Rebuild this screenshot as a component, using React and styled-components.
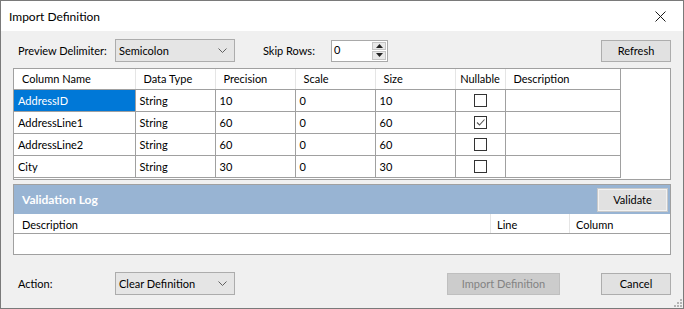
import React from "react";
import styled, { createGlobalStyle } from "styled-components";

const GlobalStyle = createGlobalStyle`
  html, body { margin: 0; padding: 0; background: #ffffff; }
  * { box-sizing: border-box; }
`;

const columns = [
  { title: "Column Name", width: 121 },
  { title: "Data Type", width: 80 },
  { title: "Precision", width: 80 },
  { title: "Scale", width: 80 },
  { title: "Size", width: 80 },
  { title: "Nullable", width: 50, center: true },
  { title: "Description", width: 115 },
];

const rows = [
  { name: "AddressID", type: "String", precision: "10", scale: "0", size: "10", nullable: false },
  { name: "AddressLine1", type: "String", precision: "60", scale: "0", size: "60", nullable: true },
  { name: "AddressLine2", type: "String", precision: "60", scale: "0", size: "60", nullable: false },
  { name: "City", type: "String", precision: "30", scale: "0", size: "30", nullable: false },
];

const Chevron = () => (
  <svg width="9" height="6" viewBox="0 0 9 6">
    <path d="M0.5 0.5 L4.5 4.5 L8.5 0.5" fill="none" stroke="#606060" strokeWidth="1" />
  </svg>
);

const CloseIcon = () => (
  <svg width="11" height="11" viewBox="0 0 11 11">
    <path d="M0.5 0.5 L10.5 10.5 M10.5 0.5 L0.5 10.5" stroke="#1a1a1a" strokeWidth="1" />
  </svg>
);

const Check = () => (
  <svg width="11" height="11" viewBox="0 0 11 11">
    <path d="M2 5.5 L4.5 8 L9.5 2.5" fill="none" stroke="#555" strokeWidth="1.1" />
  </svg>
);

const App = () => {
  return (
    <>
      <GlobalStyle />
      <Window>
        <TitleBar>
          <Title>Import Definition</Title>
          <CloseButton>
            <CloseIcon />
          </CloseButton>
        </TitleBar>
        <Body>
          <Toolbar>
            <Label $width={97}>Preview Delimiter:</Label>
            <Combo>
              <span>Semicolon</span>
              <Chevron />
            </Combo>
            <Label $left={28} $width={68}>Skip Rows:</Label>
            <Spin>
              <SpinValue>0</SpinValue>
              <SpinButtons>
                <SpinBtn>
                  <svg width="7" height="4" viewBox="0 0 7 4"><path d="M0 4 L3.5 0 L7 4 Z" fill="#222" /></svg>
                </SpinBtn>
                <SpinBtn>
                  <svg width="7" height="4" viewBox="0 0 7 4"><path d="M0 0 L3.5 4 L7 0 Z" fill="#222" /></svg>
                </SpinBtn>
              </SpinButtons>
            </Spin>
            <Spacer />
            <Button $width={70}>Refresh</Button>
          </Toolbar>

          <GridFrame>
            <Table>
              <colgroup>
                {columns.map((c) => (
                  <col key={c.title} style={{ width: c.width }} />
                ))}
              </colgroup>
              <thead>
                <tr>
                  {columns.map((c) => (
                    <HeadCell key={c.title} $center={c.center}>
                      {c.title}
                    </HeadCell>
                  ))}
                </tr>
              </thead>
              <tbody>
                {rows.map((r, i) => (
                  <tr key={r.name}>
                    <Cell $selected={i === 0}>{r.name}</Cell>
                    <Cell>{r.type}</Cell>
                    <Cell>{r.precision}</Cell>
                    <Cell>{r.scale}</Cell>
                    <Cell>{r.size}</Cell>
                    <Cell $center>
                      <CheckBox>{r.nullable && <Check />}</CheckBox>
                    </Cell>
                    <Cell />
                  </tr>
                ))}
              </tbody>
            </Table>
          </GridFrame>

          <LogPanel>
            <LogBar>
              <LogTitle>Validation Log</LogTitle>
              <Button $width={71} $height={24} $focused>
                Validate
              </Button>
            </LogBar>
            <LogHeader>
              <LogCol $flex>Description</LogCol>
              <LogCol $width={79} $divider>Line</LogCol>
              <LogCol $width={101} $divider>Column</LogCol>
            </LogHeader>
            <LogBody />
          </LogPanel>

          <Footer>
            <Label $width={97}>Action:</Label>
            <Combo>
              <span>Clear Definition</span>
              <Chevron />
            </Combo>
            <Spacer />
            <Button $width={113} $disabled>
              Import Definition
            </Button>
            <Button $width={70} $left={41}>
              Cancel
            </Button>
          </Footer>
          <Grip>
            <svg width="10" height="10" viewBox="0 0 10 10">
              <rect x="8" y="2" width="2" height="2" fill="#b4b4b4" />
              <rect x="5" y="5" width="2" height="2" fill="#b4b4b4" />
              <rect x="8" y="5" width="2" height="2" fill="#b4b4b4" />
              <rect x="2" y="8" width="2" height="2" fill="#b4b4b4" />
              <rect x="5" y="8" width="2" height="2" fill="#b4b4b4" />
              <rect x="8" y="8" width="2" height="2" fill="#b4b4b4" />
            </svg>
          </Grip>
        </Body>
      </Window>
    </>
  );
};

export default App;

const Window = styled.div`
  width: 684px;
  height: 309px;
  border: 1px solid #7a7a7a;
  display: flex;
  flex-direction: column;
  font-family: "Segoe UI", Lato, "Noto Sans", sans-serif;
  font-size: 11px;
  color: #000;
  background: #f0f0f0;
`;

const TitleBar = styled.div`
  height: 30px;
  background: #ffffff;
  display: flex;
  align-items: center;
  justify-content: space-between;
  padding-left: 8px;
`;

const Title = styled.div`
  font-size: 12px;
  color: #000;
`;

const CloseButton = styled.div`
  width: 46px;
  height: 30px;
  display: flex;
  align-items: center;
  justify-content: center;
`;

const Body = styled.div`
  position: relative;
  flex: 1;
  display: flex;
  flex-direction: column;
  padding: 8px 12px 0 12px;
`;

const Toolbar = styled.div`
  height: 23px;
  display: flex;
  align-items: center;
  padding-left: 5px;
`;

const Footer = styled(Toolbar)`
  margin-top: 17px;
  height: 23px;
`;

const Label = styled.span`
  margin-left: ${(p) => p.$left || 0}px;
  width: ${(p) => p.$width}px;
  flex-shrink: 0;
  white-space: nowrap;
`;

const Spacer = styled.div`
  flex: 1;
`;

const Combo = styled.div`
  width: 120px;
  height: 23px;
  border: 1px solid #acacac;
  background: #e5e5e5;
  display: flex;
  align-items: center;
  justify-content: space-between;
  padding: 0 7px 0 3px;
`;

const Spin = styled.div`
  width: 57px;
  height: 22px;
  border: 1px solid #a9a9a9;
  background: #fff;
  display: flex;
`;

const SpinValue = styled.div`
  flex: 1;
  padding: 2px 0 0 2px;
`;

const SpinButtons = styled.div`
  width: 16px;
  display: flex;
  flex-direction: column;
  padding: 1px;
  gap: 1px;
`;

const SpinBtn = styled.div`
  flex: 1;
  background: #e8e8e8;
  border: 1px solid #c4c4c4;
  display: flex;
  align-items: center;
  justify-content: center;
`;

const Button = styled.div`
  margin-left: ${(p) => p.$left || 0}px;
  width: ${(p) => p.$width}px;
  height: ${(p) => p.$height || 22}px;
  display: flex;
  align-items: center;
  justify-content: center;
  background: ${(p) => (p.$disabled ? "#cccccc" : "#e1e1e1")};
  border: 1px solid ${(p) => (p.$disabled ? "#bfbfbf" : p.$focused ? "#c9c9c9" : "#adadad")};
  color: ${(p) => (p.$disabled ? "#838383" : "#000")};
  box-shadow: ${(p) => (p.$focused ? "inset 0 0 0 1px #f2f2f2" : "none")};
`;

const GridFrame = styled.div`
  margin-top: 6px;
  width: 658px;
  height: 112px;
  border: 1px solid #a0a0a0;
  background: #ffffff;
`;

const Table = styled.table`
  border-collapse: collapse;
  table-layout: fixed;
  width: 606px;
  font-size: 11px;
`;

const HeadCell = styled.th`
  height: 20px;
  padding: 0 0 0 ${(p) => (p.$center ? 0 : 8)}px;
  font-weight: normal;
  text-align: ${(p) => (p.$center ? "center" : "left")};
  border-right: 1px solid #e5e5e5;
  border-bottom: 1px solid #a0a0a0;
  white-space: nowrap;
  overflow: hidden;
  &:last-child {
    border-right: 1px solid #a0a0a0;
  }
`;

const Cell = styled.td`
  height: 22px;
  padding: 0 0 0 4px;
  text-align: ${(p) => (p.$center ? "center" : "left")};
  border-right: 1px solid #a0a0a0;
  border-bottom: 1px solid #a0a0a0;
  background: ${(p) => (p.$selected ? "#0078d7" : "#fff")};
  color: ${(p) => (p.$selected ? "#fff" : "#000")};
  white-space: nowrap;
  ${(p) => p.$center && "padding: 0;"}
`;

const CheckBox = styled.div`
  width: 13px;
  height: 13px;
  border: 1px solid #333;
  background: #fff;
  margin: 0 auto;
  display: flex;
  align-items: center;
  justify-content: center;
`;

const LogPanel = styled.div`
  margin-top: 4px;
  width: 658px;
  height: 71px;
  border: 1px solid #a0a0a0;
  background: #fff;
  display: flex;
  flex-direction: column;
`;

const LogBar = styled.div`
  height: 29px;
  background: #98b4d3;
  display: flex;
  align-items: center;
  justify-content: space-between;
  padding: 0 2px 0 8px;
`;

const LogTitle = styled.span`
  color: #fff;
  font-weight: bold;
  font-size: 12px;
`;

const LogHeader = styled.div`
  height: 20px;
  display: flex;
  border-bottom: 1px solid #a0a0a0;
`;

const LogCol = styled.div`
  ${(p) => (p.$flex ? "flex: 1;" : `width: ${p.$width}px;`)}
  padding-left: ${(p) => (p.$divider ? 6 : 8)}px;
  padding-top: 1px;
  display: flex;
  align-items: center;
  border-left: ${(p) => (p.$divider ? "1px solid #e5e5e5" : "none")};
`;

const LogBody = styled.div`
  flex: 1;
`;

const Grip = styled.div`
  position: absolute;
  right: 1px;
  bottom: 1px;
  line-height: 0;
`;
